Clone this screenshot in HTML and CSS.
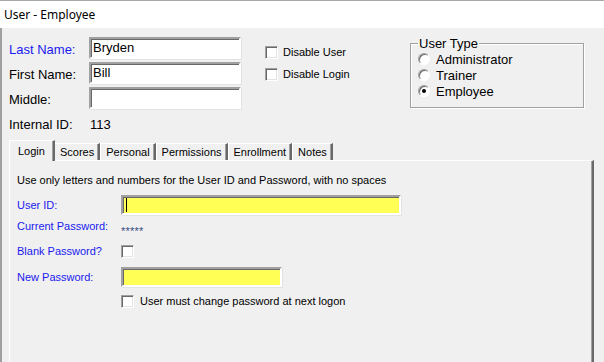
FILE: index.html
```html
<!DOCTYPE html>
<html lang="en">
<head>
    <meta charset="UTF-8">
    <title>User - Employee</title>
    <link rel="stylesheet" href="styles.css">
</head>
<body>

    <header class="title-bar">User - Employee</header>

    <main class="form">
        <section class="top-section">
            <div class="name-grid">
                <label class="name-label required">Last Name:</label>
                <div class="field">Bryden</div>
                <label class="name-label">First Name:</label>
                <div class="field">Bill</div>
                <label class="name-label">Middle:</label>
                <div class="field"></div>
                <label class="name-label id-label">Internal ID:</label>
                <div class="id-value">113</div>
            </div>

            <div class="flag-column">
                <div class="check-row"><span class="checkbox"></span><span class="check-text">Disable User</span></div>
                <div class="check-row"><span class="checkbox"></span><span class="check-text">Disable Login</span></div>
            </div>

            <fieldset class="group-box">
                <legend>User Type</legend>
                <div class="radio-row"><span class="radio"></span>Administrator</div>
                <div class="radio-row"><span class="radio"></span>Trainer</div>
                <div class="radio-row"><span class="radio checked"></span>Employee</div>
            </fieldset>
        </section>

        <nav class="tab-strip">
            <div class="tab active">Login</div>
            <div class="tab">Scores</div>
            <div class="tab">Personal</div>
            <div class="tab">Permissions</div>
            <div class="tab">Enrollment</div>
            <div class="tab">Notes</div>
        </nav>

        <section class="tab-panel">
            <p class="hint">Use only letters and numbers for the User ID and Password, with no spaces</p>

            <div class="panel-row row-userid">
                <span class="panel-label">User ID:</span>
                <div class="field yellow wide"><span class="caret"></span></div>
            </div>

            <div class="panel-row row-current">
                <span class="panel-label">Current Password:</span>
                <span class="stars">*****</span>
            </div>

            <div class="panel-row row-blank">
                <span class="panel-label">Blank Password?</span>
                <span class="checkbox"></span>
            </div>

            <div class="panel-row row-new">
                <span class="panel-label">New Password:</span>
                <div class="field yellow short"></div>
            </div>

            <div class="panel-row row-change">
                <span class="panel-label"></span>
                <span class="checkbox"></span>
                <span class="change-text">User must change password at next logon</span>
            </div>
        </section>
    </main>

</body>
</html>
```

FILE: styles.css
```css
:root {
    --color-bg: #f0f0f0;
    --color-shadow: #a0a0a0;
    --color-dark: #696969;
    --color-blue: #1a1aee;
    --color-yellow: #ffff55;
    --color-text: #000000;
}
* { box-sizing: border-box; }
html, body { margin: 0; padding: 0; }
body { font-family: 'Liberation Sans', Arial, sans-serif; background-color: var(--color-bg); color: var(--color-text); overflow: hidden; width: 604px; height: 362px; }

.title-bar { height: 28px; background: #ffffff; border-top: 1px solid #a8a8a8; padding-left: 4px; font-family: 'Noto Sans', sans-serif; font-size: 12px; line-height: 27px; color: #000; }

.form { border-left: 2px solid var(--color-shadow); padding: 0 10px 0 7px; height: 334px; }

/* top area */
.top-section { display: flex; align-items: flex-start; height: 107px; }
.name-grid { display: grid; grid-template-columns: 80px 152px; grid-auto-rows: 22px; row-gap: 3px; padding-top: 9px; font-size: 13px; }
.name-label { display: flex; align-items: center; padding-top: 3px; }
.name-label.required { color: var(--color-blue); }
.field { background: #ffffff; border: 2px solid; border-color: var(--color-shadow) #ffffff #ffffff var(--color-shadow); box-shadow: inset 1px 1px 0 var(--color-dark), 1px 1px 0 #e3e3e3; padding: 0 2px; font-size: 13px; line-height: 17px; }
.id-value { display: flex; align-items: center; padding-top: 3px; padding-left: 1px; }

.flag-column { flex: none; width: 145px; margin-left: 24px; padding-top: 13px; font-size: 11px; }
.check-row { display: flex; align-items: center; height: 22px; gap: 5px; }
.checkbox { flex: none; width: 13px; height: 13px; background: #ffffff; border: 1px solid; border-color: var(--color-shadow) #ffffff #ffffff var(--color-shadow); box-shadow: inset 1px 1px 0 var(--color-dark), inset -1px -1px 0 #e3e3e3; }

.group-box { flex: none; width: 174px; height: 72px; margin: 8px 0 0 0; padding: 0 0 0 7px; border: 1px solid var(--color-shadow); box-shadow: inset 1px 1px 0 #ffffff, 1px 1px 0 #ffffff; font-size: 13px; }
.group-box legend { padding: 0 1px; line-height: 15px; }
.radio-row { display: flex; align-items: center; height: 16px; gap: 6px; }
.radio { flex: none; width: 12px; height: 12px; border-radius: 50%; background: #ffffff; border: 1px solid; border-color: var(--color-shadow) #ffffff #ffffff var(--color-shadow); box-shadow: inset 1px 1px 0 var(--color-dark); position: relative; }
.radio.checked::after { content: ''; position: absolute; left: 3px; top: 3px; width: 4px; height: 4px; border-radius: 50%; background: #000; }

/* tabs */
.tab-strip { display: flex; align-items: flex-end; height: 25px; padding-top: 5px; font-size: 11px; position: relative; z-index: 1; }
.tab { height: 17px; padding: 0 4px 0 5px; line-height: 16px; border-top: 1px solid #ffffff; border-left: 1px solid #ffffff; border-right: 2px solid; border-right-color: var(--color-dark); box-shadow: inset -1px 0 0 var(--color-shadow); background: var(--color-bg); }
.tab.active { height: 21px; margin-bottom: -1px; padding: 2px 8px 0 8px; line-height: 16px; }
.tab.active + .tab { border-left: none; }

.tab-panel { height: 210px; border-top: 1px solid #ffffff; border-left: 1px solid #ffffff; border-right: 2px solid var(--color-dark); box-shadow: inset -1px 0 0 var(--color-shadow); padding: 0 0 0 7px; font-size: 11px; }
.hint { margin: 0; padding-top: 11px; height: 27px; line-height: 16px; }
.panel-row { display: flex; align-items: center; height: 20px; }
.panel-label { flex: none; width: 104px; color: var(--color-blue); }
.row-userid { margin-top: 7px; }
.row-current { margin-top: 1px; }
.row-blank { margin-top: 5px; }
.row-new { margin-top: 6px; }
.row-change { margin-top: 4px; }
.field.yellow { height: 20px; background: var(--color-yellow); display: flex; align-items: center; }
.field.wide { width: 280px; }
.field.short { width: 161px; }
.caret { width: 1px; height: 14px; background: #000; margin-left: 1px; }
.stars { font-size: 11px; color: #3a4a80; padding-top: 9px; letter-spacing: 0.2px; }
.change-text { margin-left: 6px; color: #000; }
```
